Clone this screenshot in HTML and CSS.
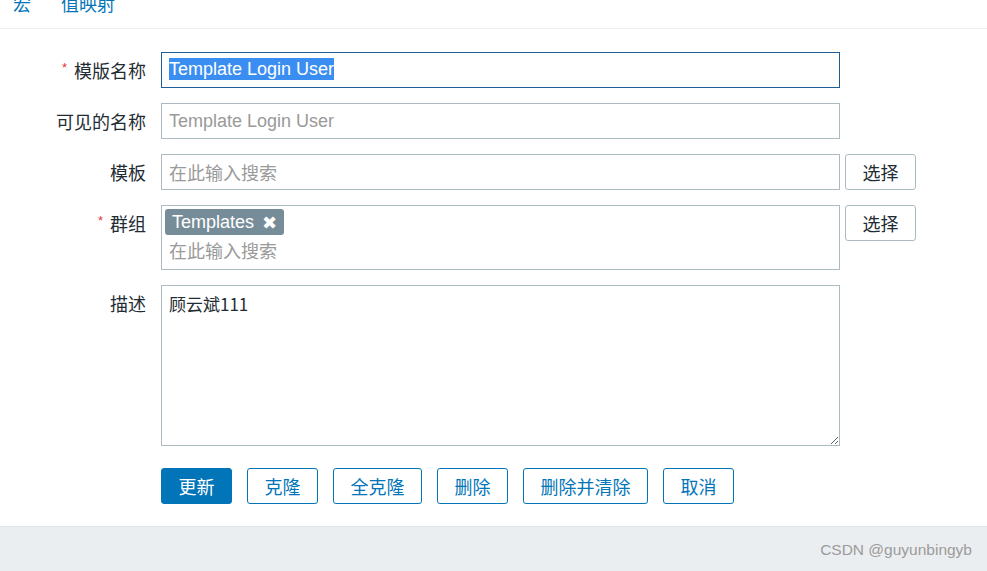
FILE: index.html
```html
<!DOCTYPE html>
<html lang="zh">
<head>
<meta charset="utf-8">
<link rel="stylesheet" href="styles.css">
</head>
<body>
<div class="page">
  <div class="tabs">
    <span class="tab">宏</span>
    <span class="tab">值映射</span>
  </div>
  <form class="form">
    <div class="row">
      <label class="label"><span class="req">*</span>模版名称</label>
      <div class="input focused"><span class="sel">Template Login User</span></div>
    </div>
    <div class="row">
      <label class="label">可见的名称</label>
      <div class="input placeholder">Template Login User</div>
    </div>
    <div class="row">
      <label class="label">模板</label>
      <div class="input placeholder cjk">在此输入搜索</div>
      <button type="button" class="btn-select">选择</button>
    </div>
    <div class="row">
      <label class="label"><span class="req">*</span>群组</label>
      <div class="multi">
        <span class="tag">Templates <span class="x">✖</span></span>
        <div class="multi-ph">在此输入搜索</div>
      </div>
      <button type="button" class="btn-select">选择</button>
    </div>
    <div class="row">
      <label class="label">描述</label>
      <textarea class="textarea">顾云斌111</textarea>
    </div>
    <div class="actions">
      <button type="button" class="btn primary">更新</button>
      <button type="button" class="btn">克隆</button>
      <button type="button" class="btn">全克隆</button>
      <button type="button" class="btn">删除</button>
      <button type="button" class="btn">删除并清除</button>
      <button type="button" class="btn">取消</button>
    </div>
  </form>
  <footer class="footer"><span class="mark">CSDN @guyunbingyb</span></footer>
</div>
</body>
</html>
```
FILE: styles.css
```css
* { box-sizing: border-box; }
html, body {
  margin: 0;
  padding: 0;
  background: #ffffff;
  font-family: "Liberation Sans", "Noto Sans CJK SC", sans-serif;
  font-size: 18px;
  color: #1f2c33;
  overflow: hidden;
}
.page {
  width: 987px;
  height: 571px;
  display: flex;
  flex-direction: column;
}
.tabs {
  height: 29px;
  display: flex;
  gap: 30px;
  padding-left: 13px;
  border-bottom: 1px solid #ebeef0;
  overflow: hidden;
}
.tab {
  font-family: "Noto Sans CJK SC", sans-serif;
  color: #0275b8;
  line-height: 18px;
  margin-top: -6px;
}
.form {
  padding-top: 23px;
  padding-bottom: 22px;
}
.row {
  display: flex;
  align-items: flex-start;
  margin-bottom: 15px;
}
.label {
  width: 161px;
  height: 36px;
  padding-right: 15px;
  display: flex;
  align-items: center;
  justify-content: flex-end;
  font-family: "Noto Sans CJK SC", sans-serif;
  font-size: 18px;
  color: #1f2c33;
  white-space: nowrap;
}
.req {
  color: #e33734;
  font-family: "Liberation Sans", sans-serif;
  font-size: 13px;
  line-height: 1;
  margin-right: 7px;
  margin-top: -6px;
}
.input {
  width: 679px;
  height: 36px;
  border: 1px solid #acbbc2;
  padding: 0 7px;
  display: flex;
  align-items: center;
  font-size: 18px;
  white-space: nowrap;
}
.input.focused { border-color: #1f5d95; }
.sel {
  background: #3a8ef2;
  color: #ffffff;
  line-height: 22px;
  margin-top: -2px;
}
.placeholder { color: #9a9a9a; }
.cjk { font-family: "Noto Sans CJK SC", sans-serif; }
.btn-select {
  margin-left: 5px;
  width: 71px;
  height: 36px;
  border: 1px solid #acbbc2;
  border-radius: 3px;
  background: #ffffff;
  color: #1f2c33;
  font-family: "Noto Sans CJK SC", sans-serif;
  font-size: 18px;
  padding: 0;
}
.multi {
  width: 679px;
  height: 65px;
  border: 1px solid #acbbc2;
  padding: 3px 3px 0 3px;
}
.tag {
  display: inline-flex;
  align-items: center;
  height: 26px;
  padding: 0 7px 0 7px;
  background: #768d99;
  color: #ffffff;
  border-radius: 3px;
  font-size: 18px;
}
.x {
  font-size: 18px;
  margin-left: 8px;
  font-family: "DejaVu Sans", sans-serif;
  font-weight: bold;
}
.multi-ph {
  padding-left: 4px;
  margin-top: 2px;
  line-height: 26px;
  color: #9a9a9a;
  font-family: "Noto Sans CJK SC", sans-serif;
}
.textarea {
  width: 679px;
  height: 161px;
  border: 1px solid #acbbc2;
  border-radius: 0;
  padding: 5px 7px;
  margin: 0;
  font-family: "Noto Sans CJK SC", "Liberation Sans", sans-serif;
  font-size: 17px;
  color: #1f2c33;
  resize: both;
  outline: none;
}
.actions {
  display: flex;
  gap: 15px;
  padding-left: 161px;
  margin-top: 22px;
}
.btn {
  height: 36px;
  padding: 0 16.5px;
  border: 1px solid #0275b8;
  border-radius: 3px;
  background: #ffffff;
  color: #0275b8;
  font-family: "Noto Sans CJK SC", sans-serif;
  font-size: 18px;
}
.btn.primary {
  background: #0275b8;
  color: #ffffff;
}
.footer {
  flex: 1;
  background: #ebeef0;
  border-top: 1px solid #dfe4e7;
  display: flex;
  justify-content: flex-end;
  align-items: center;
  padding-right: 15px;
}
.mark {
  font-family: "Liberation Sans", sans-serif;
  font-size: 15.5px;
  color: #9b9b9b;
  margin-top: 1px;
}
```
